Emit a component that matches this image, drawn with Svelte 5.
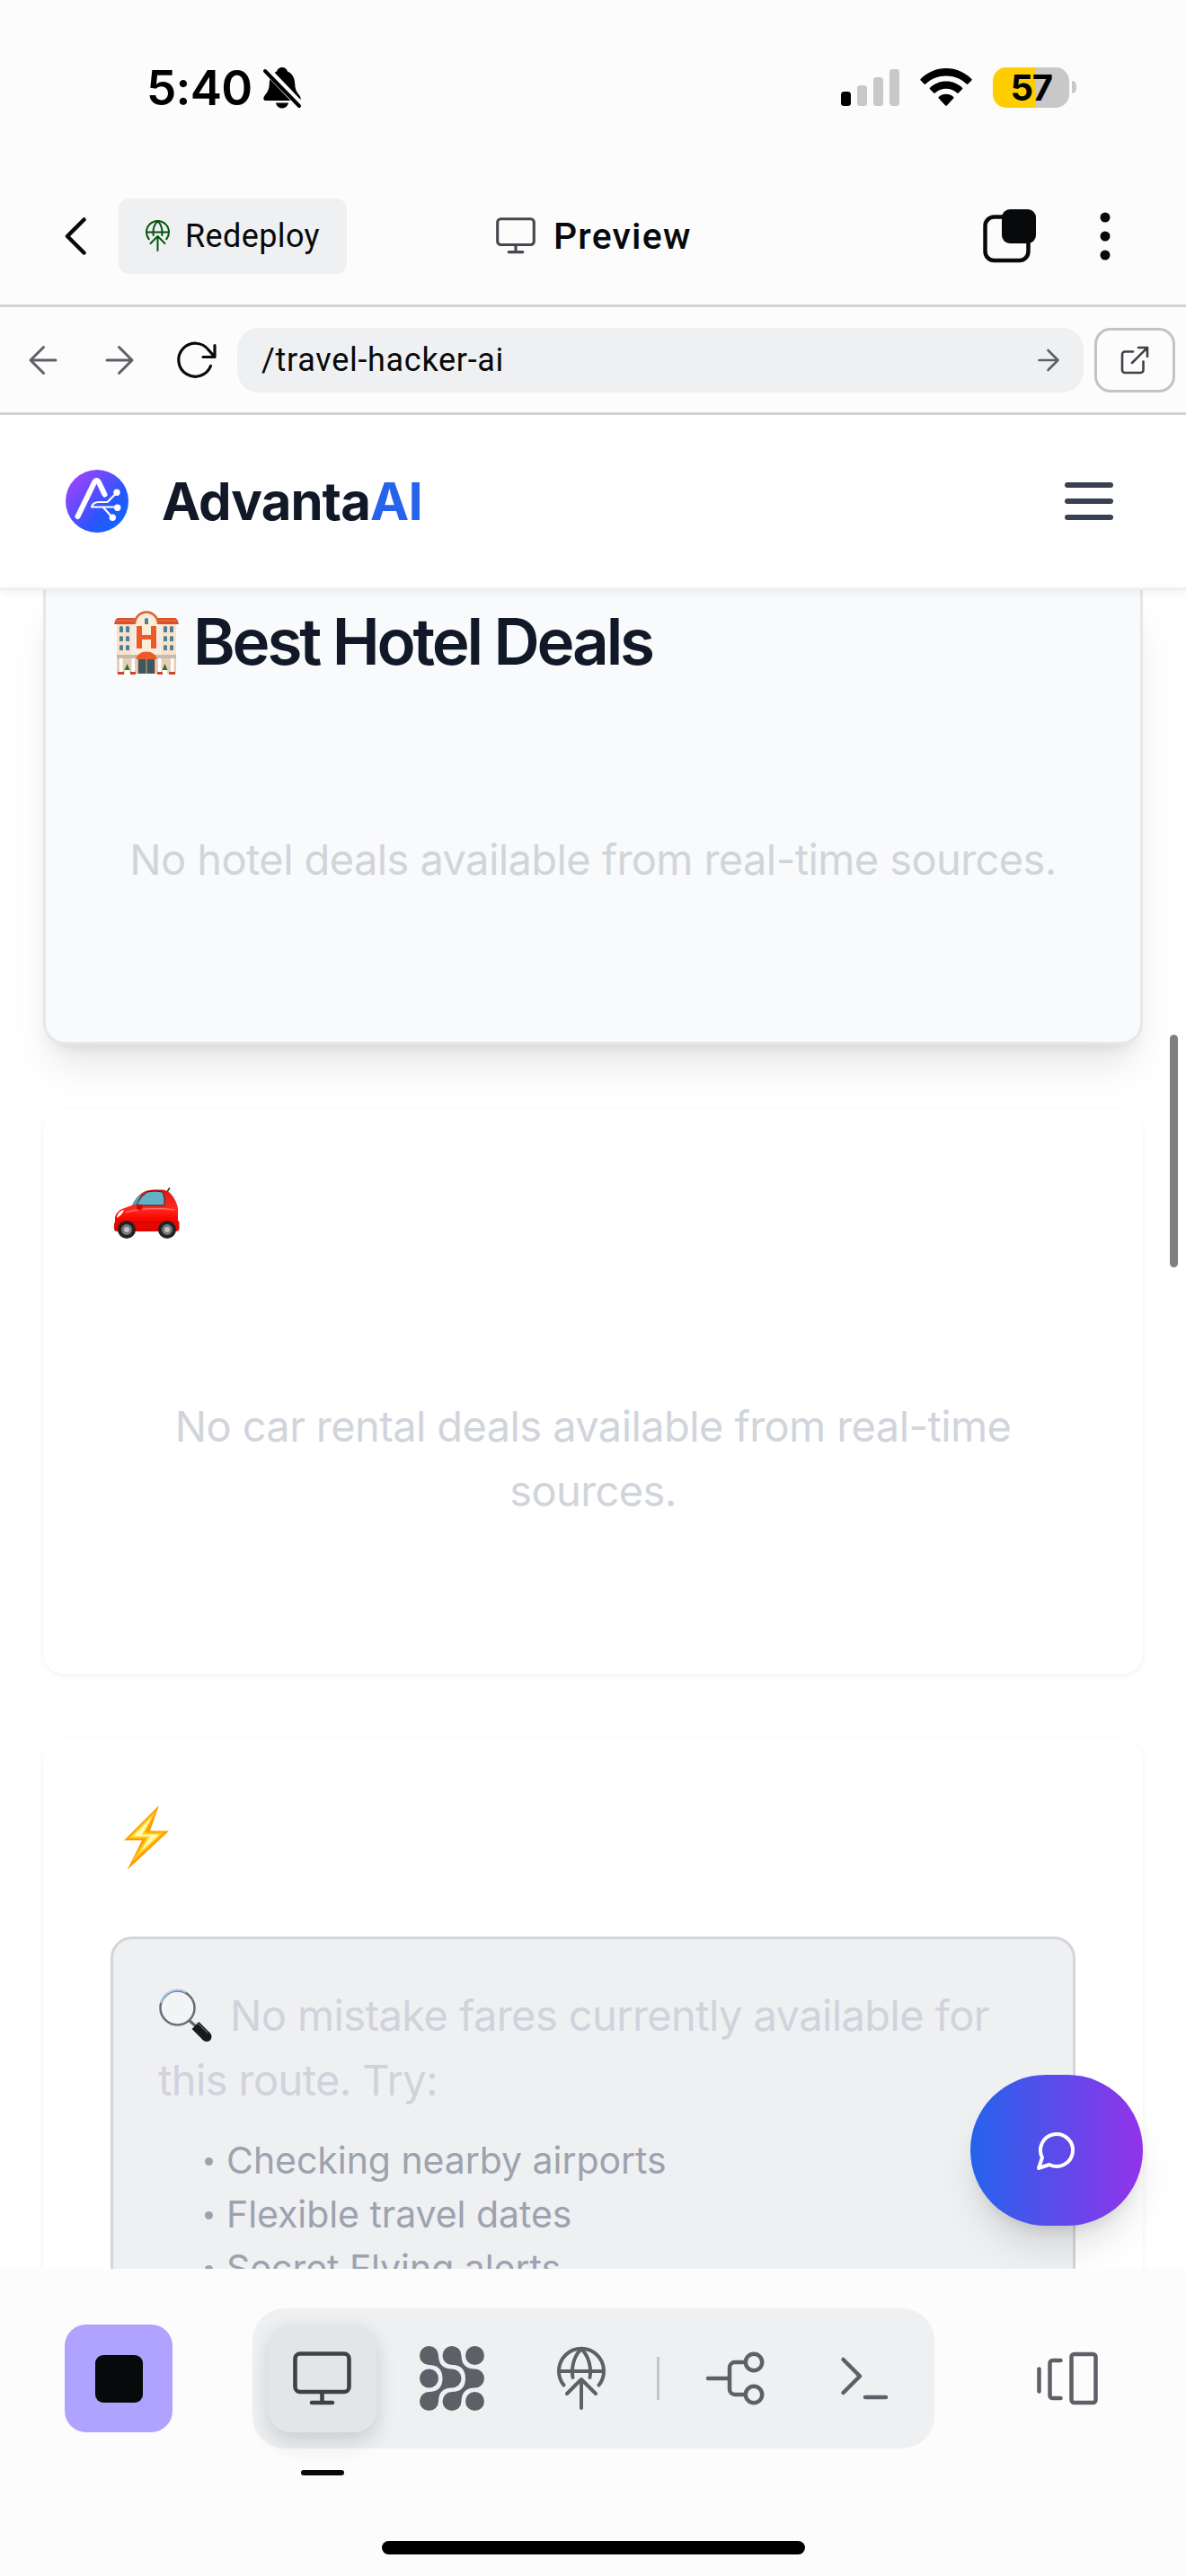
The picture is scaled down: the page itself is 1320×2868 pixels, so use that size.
<script>
  const tips = ['Checking nearby airports', 'Flexible travel dates', 'Secret Flying alerts'];
</script>

{#snippet monitor(w, sw)}
  <svg class="ic" width={w} height={w * 60 / 65} viewBox="0 0 65 60" fill="none" stroke="currentColor" stroke-width={sw} stroke-linecap="round" stroke-linejoin="round">
    <rect x="2.5" y="2.5" width="60" height="42.5" rx="5.5" />
    <path d="M32.5 45v12M21 57h23" />
  </svg>
{/snippet}

{#snippet globe(w)}
  <svg class="ic" width={w} height={w * 71 / 54} viewBox="0 0 54 71" fill="none" stroke="currentColor" stroke-width="4" stroke-linecap="round" stroke-linejoin="round">
    <path d="M7.5 42.5A25 25 0 1 1 46.5 42.5M2 27h50" />
    <path d="M17.5 34C15.500 23 19 9 27 2.500C35 9 38.500 23 36.500 34" />
    <path d="M27 68V36M11 52L27 36L43 52" />
  </svg>
{/snippet}

<div class="screen">
  <header class="status">
    <div class="clock">
      <span>5:40</span>
      <svg width="42" height="46" viewBox="0 0 42 46">
        <path d="M21 0c-3 0-5 1.500-6 4.500C9.500 7 7 12 6.800 18 6.500 26 4 28 1.200 32 -.5 35 .5 37 3 37h36c2.500 0 3.500-2 1.800-5C38 28 35.500 26 35.200 18 35 12 32.500 7 27 4.500 26 1.500 24 0 21 0zM14 39.500h14c-.8 3.800-3.500 6-7 6s-6.200-2.200-7-6z" />
        <path d="M0 -1L44 45" stroke="#fcfcfc" stroke-width="9" />
        <path d="M2 4L40 43" stroke="#000" stroke-width="4" stroke-linecap="round" />
      </svg>
    </div>
    <div class="radio">
      <svg width="65" height="41" viewBox="0 0 65 41">
        <rect y="25" width="11" height="16" rx="3.500" />
        <g fill="#c8c8c8">
          <rect x="18" y="18" width="11" height="23" rx="3.500" />
          <rect x="36" y="9" width="11" height="32" rx="3.500" />
          <rect x="54" width="11" height="41" rx="3.500" />
        </g>
      </svg>
      <svg class="wifi" width="58" height="42" viewBox="0 0 58 42">
        <path d="M29 0C18 0 8 4.500 .6 12q-.7.800 0 1.600l4 4q.8.700 1.600 0C12.500 11.500 20.500 8.500 29 8.500s16.500 3 22.800 9.100q.8.700 1.600 0l4-4q.7-.8 0-1.600C50 4.500 40 0 29 0z" />
        <path d="M29 14.500c-7 0-13.300 2.700-18 7.200q-.8.800 0 1.600l4.200 4.200q.8.700 1.600 0C20 24.500 24.300 22.800 29 22.800s9 1.700 12.200 4.700q.8.700 1.600 0l4.200-4.200q.8-.8 0-1.600C42.300 17.200 36 14.500 29 14.500z" />
        <path d="M29 28.700c-3.200 0-6 1.200-8.200 3.200q-.8.800 0 1.600l7.200 7.800q1 1 2 0l7.200-7.800q.8-.8 0-1.600C35 29.900 32.200 28.700 29 28.700z" />
      </svg>
      <div class="battery"><span>57</span></div>
      <div class="nub"></div>
    </div>
  </header>

  <nav class="top">
    <svg class="back" width="24" height="42" viewBox="0 0 24 42" fill="none" stroke="#07090a" stroke-width="4.500" stroke-linecap="round" stroke-linejoin="round"><path d="M21.500 2.500L3 21L21.500 39.500" /></svg>
    <button class="redeploy"><span class="green">{@render globe(27)}</span><span>Redeploy</span></button>
    <div class="title"><span class="slate">{@render monitor(44, 4.6)}</span><span>Preview</span></div>
    <svg class="tabs" width="60" height="60" viewBox="0 0 60 60">
      <rect x="2.500" y="8.500" width="48" height="48.500" rx="10" fill="none" stroke="#07090a" stroke-width="4.500" />
      <rect x="21" y="0" width="38" height="38" rx="9" fill="#07090a" />
    </svg>
    <svg class="dots" width="12" height="54" viewBox="0 0 12 54" fill="#07090a"><circle cx="6" cy="6" r="5.500" /><circle cx="6" cy="27" r="5.500" /><circle cx="6" cy="48" r="5.500" /></svg>
  </nav>

  <div class="address">
    <svg width="32" height="32" viewBox="0 0 32 32" fill="none" stroke="#5e6067" stroke-width="3" stroke-linecap="round" stroke-linejoin="round"><path d="M30 16H2M16.500 1.500L2 16L16.500 30.500" /></svg>
    <svg width="32" height="32" viewBox="0 0 32 32" fill="none" stroke="#5e6067" stroke-width="3" stroke-linecap="round" stroke-linejoin="round"><path d="M2 16H30M15.500 1.500L30 16L15.500 30.500" /></svg>
    <svg class="reload" width="45" height="42" viewBox="0 0 45 42" fill="none" stroke="#07090a" stroke-width="3.200" stroke-linecap="round" stroke-linejoin="round"><path d="M38.500 27.500A18.500 18.500 0 1 1 36 9.500L43 17.500M43 4.500V17.500H30" /></svg>
    <div class="field">
      <span>/travel-hacker-ai</span>
      <svg width="24" height="26" viewBox="0 0 24 26" fill="none" stroke="#5e6067" stroke-width="2.600" stroke-linecap="round" stroke-linejoin="round"><path d="M1.500 13H22.500M11.500 2L22.500 13L11.500 24" /></svg>
    </div>
    <button class="open">
      <svg width="32" height="32" viewBox="0 0 32 32" fill="none" stroke="#3f4148" stroke-width="2.600" stroke-linecap="round" stroke-linejoin="round"><path d="M14 6.500H5A3 3 0 0 0 2 9.500V27A3 3 0 0 0 5 30H22.500A3 3 0 0 0 25.500 27V17.500M20 2H30V12M30 2L13 19" /></svg>
    </button>
  </div>

  <main class="page">
    <div class="site">
      <svg class="logo" width="70" height="70" viewBox="0 0 70 70">
        <defs><linearGradient id="lg" x1="0.100" y1="0.150" x2="0.850" y2="0.850"><stop offset="0" stop-color="#9a43ff" /><stop offset="0.700" stop-color="#2b55ff" /><stop offset="1" stop-color="#1464ff" /></linearGradient></defs>
        <circle cx="35" cy="35" r="35" fill="url(#lg)" />
        <g fill="none" stroke="#fff" stroke-linecap="round" stroke-linejoin="round">
          <path d="M13.500 52L32 14Q34.500 10 37 14L43.500 27.500" stroke-width="6" />
          <path d="M29 41.500Q30.500 36 37 36H46.500L57 25.500M29 41.500H57M41.500 41.500L52 53" stroke-width="2.200" />
        </g>
        <g fill="#fff"><circle cx="57" cy="25.300" r="3.700" /><circle cx="57.700" cy="42.300" r="3.700" /><circle cx="52.300" cy="53.300" r="3.700" /></g>
      </svg>
      <div class="brand">Advanta<b>AI</b></div>
      <div class="burger"><i></i><i></i><i></i></div>
    </div>

    <div class="content">
      <section class="card hotel">
        <h2>
          <svg width="72" height="72" viewBox="0 0 72 72">
            <path d="M3 14H69V70H3z" fill="#f8e0c9" />
            <path d="M23 70V14a13 13 0 0 1 26 0V70z" fill="#fbeed8" />
            <path d="M19 15h4v34h-4zM49 15h4v34h-4z" fill="#f1ece8" />
            <path d="M0 15Q1 9 4 8H23V15zM49 8H68Q71 9 72 15H49z" fill="#d9502b" />
            <path d="M1 11H22M50 11H71" stroke="#f07a50" stroke-width="1" />
            <path d="M23 15a13 13.500 0 0 1 26 0" fill="none" stroke="#e0603a" stroke-width="2.500" />
            <path d="M25 17h6v10h10V17h6v25h-6V32H31V42h-6z" fill="#ee5a2a" />
            <g fill="#4d8099"><path d="M34 9q2-2 4 0v6h-4zM6 18q2-2 4 0v6H6zM13 18q2-2 4 0v6h-4zM6 29q2-2 4 0v5H6zM13 29q2-2 4 0v5h-4zM6 39q2-2 4 0v5H6zM13 39q2-2 4 0v5h-4zM55 18q2-2 4 0v6h-4zM62 18q2-2 4 0v6h-4zM55 29q2-2 4 0v5h-4zM62 29q2-2 4 0v5h-4zM55 39q2-2 4 0v5h-4zM62 39q2-2 4 0v5h-4z" /></g>
            <path d="M3 53H69V70H3z" fill="#e8cdb6" />
            <path d="M3 49H69V53H3z" fill="#c4bcb0" />
            <path d="M24.500 54a11.500 8.500 0 0 1 23 0z" fill="#ee5a2a" />
            <path d="M26 54H46V70H26z" fill="#3f5563" />
            <path d="M35.500 54h1v16h-1zM26 54h1v16h-1zM45 54h1v16h-1z" fill="#d8b25a" />
            <path d="M6 53h3.500v15H6zM19.500 53h3.500v15h-3.500zM49 53h3.500v15H49zM63 53h3.500v15H63z" fill="#fff" />
            <path d="M12 66h5v4h-5zM54 66h5v4h-5z" fill="#fff" />
            <path d="M11.500 66l3-7 3 7zM53.500 66l3-7 3 7z" fill="#1d7a2a" />
            <path d="M4 68h7v3H4zM18 68h6v3h-6zM48 68h6v3h-6zM61 68h7v3h-7z" fill="#c9482a" />
          </svg>
          <span>Best Hotel Deals</span>
        </h2>
        <p><span>No hotel deals available from real-time sources.</span></p>
      </section>

      <section class="card car">
        <h2>
          <svg width="73" height="58" viewBox="0 0 73 58">
            <defs><linearGradient id="body" x1="0" y1="0" x2="0" y2="1"><stop offset="0" stop-color="#d81a12" /><stop offset="0.450" stop-color="#ff2a20" /><stop offset="0.700" stop-color="#f80600" /><stop offset="1" stop-color="#d80400" /></linearGradient></defs>
            <path d="M59 5L61.500 1" stroke="#444" stroke-width="1.800" stroke-linecap="round" />
            <path d="M1 39V33Q3 26 10 23.500L20 20Q25 10 33 5Q37 2.500 45 2.500H52Q59 2.500 63 7Q69 14 71 23V37L72.500 38V46Q72 49 69 49H3Q0 49 0 46V40z" fill="url(#body)" />
            <path d="M25 19Q30 9 37 5Q45 3 54 5Q57 12 56 20H32z" fill="#62b0c4" stroke="#4b1a1a" stroke-width="1" />
            <path d="M20 20Q24 11 31 6L25 19z" fill="#4d9fb5" />
            <path d="M3 33Q5 26 11 25Q9 31 3 34z" fill="#fff" />
            <path d="M3 39H70" stroke="#b80a06" stroke-width="1" />
            <path d="M12 28Q35 21 68 25" fill="none" stroke="#ff7a6e" stroke-width="1.200" />
            <rect x="25" y="19" width="6.500" height="6" rx="2" fill="#c90d08" />
            <circle cx="14" cy="47" r="10" fill="#222" /><circle cx="59" cy="47" r="10" fill="#222" />
            <circle cx="14" cy="47" r="6" fill="#77777b" /><circle cx="59" cy="47" r="6" fill="#77777b" />
            <circle cx="14" cy="47" r="3" fill="#c4c4c8" /><circle cx="59" cy="47" r="3" fill="#c4c4c8" />
          </svg>
        </h2>
        <p><span>No car rental deals available from real-time</span><br /><span>sources.</span></p>
      </section>

      <section class="card fares">
        <h2>
          <svg width="50" height="72" viewBox="0 0 50 72">
            <path d="M39 0L0 39H20L3.500 72L50 28.500H29z" fill="#ff9d00" />
            <path d="M35.500 6L5 36.500H25L9 63L44 30.500H23z" fill="#ffd21f" />
            <path d="M32 12L10 34.500H29L18 52L39 32.500H20z" fill="#fff9b8" />
          </svg>
        </h2>
        <div class="box">
          <p class="l1">
            <svg width="60" height="60" viewBox="0 0 60 60">
              <path d="M34 35L42 42" stroke="#63676b" stroke-width="3" />
              <path d="M41.500 41L53.500 53" stroke="#17191c" stroke-width="11" />
              <path d="M53 52.500L54 53.500" stroke="#17191c" stroke-width="11" stroke-linecap="round" />
              <path d="M44 38.500L55 49" stroke="#55585c" stroke-width="1.500" stroke-linecap="round" />
              <circle cx="21.500" cy="21.500" r="19" fill="#f3f4f5" stroke="#6b6f73" stroke-width="2.500" />
              <path d="M3 16A19.500 19.500 0 0 1 31 4" fill="none" stroke="#a9c8ee" stroke-width="2" />
            </svg>
            <span>No mistake fares currently available for</span>
          </p>
          <p class="l2"><span>this route. Try:</span></p>
          <ul>
            {#each tips as tip}
              <li><i></i><span>{tip}</span></li>
            {/each}
          </ul>
        </div>
      </section>
    </div>
    <div class="scroll"></div>
    <button class="fab">
      <svg width="48" height="48" viewBox="0 0 24 24" fill="none" stroke="#fff" stroke-width="2" stroke-linecap="round" stroke-linejoin="round"><path d="M7.900 20A9 9 0 1 0 4 16.100L2 22Z" /></svg>
    </button>
  </main>

  <footer>
    <div class="tools">
      <button class="stop"><i></i></button>
      <div class="pill">
        <button class="tool active">{@render monitor(65, 4.6)}<i class="mark"></i></button>
        <button class="tool">
          <svg width="72" height="72" viewBox="0 0 72 72" fill="currentColor">
            <path d="M10.500 0A10.500 10.500 0 0 1 21 10.500C21 20 26 25.500 36 25.500A10.500 10.500 0 0 1 36 46.500C26 46.500 21 52 21 61.500A10.500 10.500 0 1 1 10.500 51C20 51 25.500 46 25.500 36S20 21 10.500 21A10.500 10.500 0 0 1 10.500 0z" />
            <path d="M36 0A10.500 10.500 0 0 1 46.500 10.500C46.500 20 51.500 25.500 61.500 25.500A10.500 10.500 0 0 1 61.500 46.500C51.500 46.500 46.500 52 46.500 61.500A10.500 10.500 0 1 1 36 51C45.500 51 51 46 51 36S45.500 21 36 21A10.500 10.500 0 0 1 36 0z" />
            <circle cx="61.500" cy="10.500" r="10.500" /><circle cx="10.500" cy="36" r="10.500" /><circle cx="61.500" cy="61.500" r="10.500" />
          </svg>
        </button>
        <button class="tool">{@render globe(54)}</button>
        <span class="sep"></span>
        <button class="tool">
          <svg width="66" height="60" viewBox="0 0 66 60" fill="none" stroke="currentColor" stroke-width="4.500" stroke-linecap="round" stroke-linejoin="round"><circle cx="54" cy="12" r="9.200" /><circle cx="54" cy="48" r="9.200" /><path d="M3 30H27M44 12H33A6 6 0 0 0 27 18V42A6 6 0 0 0 33 48H44" /></svg>
        </button>
        <button class="tool">
          <svg width="54" height="48" viewBox="0 0 54 48" fill="none" stroke="currentColor" stroke-width="4.500" stroke-linecap="round" stroke-linejoin="round"><path d="M3.500 3L22 21.500L3.500 40M28 45H51" /></svg>
        </button>
      </div>
      <button class="layout">
        <svg width="70" height="60" viewBox="0 0 70 60" fill="none" stroke="currentColor" stroke-width="4.500" stroke-linecap="round" stroke-linejoin="round"><path d="M3.500 19.500V44.500M27.500 10H18.500A3 3 0 0 0 15.500 13V49A3 3 0 0 0 18.500 52H27.500" /><rect x="39.500" y="3" width="27" height="54" rx="3" /></svg>
      </button>
    </div>
    <div class="home"></div>
  </footer>
</div>

<style>
  :global(body) { margin: 0; }
  .screen { width: 1320px; height: 2868px; overflow: hidden; display: flex; flex-direction: column; background: #fcfcfc; font-family: Inter, "Liberation Sans", sans-serif; color: #07090a; }
  .screen :global(*) { box-sizing: border-box; }
  svg { display: block; flex: none; overflow: visible; }
  button { border: 0; padding: 0; margin: 0; background: none; font: inherit; color: inherit; display: flex; align-items: center; justify-content: center; flex: none; }
  h2, p, ul { margin: 0; padding: 0; }
  span { white-space: nowrap; }

  .status { height: 186px; flex: none; display: flex; justify-content: space-between; padding: 73px 122px 0 163px; color: #000; }
  .clock { display: flex; height: 48px; gap: 13px; align-items: center; font-size: 53px; font-weight: 600; line-height: 48px; letter-spacing: -0.800px; }
  .clock span { margin-top: 2px; }
  .clock svg { margin-top: 2px; }
  .radio { display: flex; align-items: center; height: 48px; }
  .wifi { margin: 0 23px; }
  .battery { width: 85px; height: 45px; border-radius: 15px; background: linear-gradient(90deg, #ffce00 48px, #c8c8c8 48px); display: flex; align-items: center; justify-content: center; font-size: 40px; font-weight: 700; letter-spacing: -1.500px; }
  .nub { width: 5px; height: 14px; margin-left: 3px; background: #c8c8c8; border-radius: 0 5px 5px 0; }

  .top { height: 156px; flex: none; border-bottom: 3px solid #d3d3d3; display: flex; align-items: center; padding: 0 84px 0 72px; }
  .redeploy { width: 254px; height: 84px; margin-left: 36px; border-radius: 12px; background: #eff0f2; font-family: Roboto, sans-serif; font-size: 36px; gap: 17px; letter-spacing: 0.400px; }
  .green { color: #07530f; }
  .slate { color: #46484f; }
  .title { flex: 1; margin-left: 166px; display: flex; align-items: center; gap: 20px; font-family: Roboto, sans-serif; font-size: 41px; font-weight: 500; letter-spacing: 1.200px; }
  .dots { margin-left: 70px; }

  .address { height: 120px; flex: none; border-bottom: 3px solid #d3d3d3; display: flex; align-items: center; padding: 0 12px 0 32px; }
  .address > svg + svg { margin-left: 53px; }
  .address > .reload { margin-left: 47px; }
  .field { margin-left: 23px; width: 942px; height: 72px; border-radius: 24px; background: #eff0f2; display: flex; align-items: center; justify-content: space-between; padding: 0 27px; font-family: Roboto, sans-serif; font-size: 36px; letter-spacing: 0.700px; }
  .open { margin-left: 12px; width: 90px; height: 72px; border: 3px solid #c0c5c4; border-radius: 18px; }

  .page { height: 2064px; flex: none; background: #fff; position: relative; overflow: hidden; display: flex; flex-direction: column; }
  .site { height: 195px; flex: none; background: #fefefe; border-bottom: 3px solid #eff0f2; display: flex; align-items: center; padding: 0 81px 0 73px; position: relative; z-index: 1; box-shadow: 0 3px 9px rgba(0, 0, 0, 0.06); }
  .brand { flex: 1; margin-left: 37px; font-size: 58px; font-weight: 700; color: #111827; letter-spacing: -0.900px; }
  .brand b { color: #2563eb; font-weight: 700; }
  .burger { width: 54px; display: grid; gap: 12px; }
  .burger i { height: 6px; border-radius: 3px; background: #374151; }

  .content { flex: 1; min-height: 0; padding: 0 48px; display: flex; flex-direction: column; gap: 72px; }
  .card { flex: none; border-radius: 24px; padding: 0 72px; }
  .hotel { height: 506px; background: #f9fafb; border: 3px solid #e5e7eb; border-top: 0; border-radius: 0 0 24px 24px; box-shadow: 0 30px 45px -9px rgba(0, 0, 0, 0.1), 0 12px 18px -12px rgba(0, 0, 0, 0.12); }
  .car { height: 629px; background: #fff; box-shadow: 0 2px 6px rgba(0, 0, 0, 0.06); padding: 0 75px; }
  .fares { height: 700px; background: #fff; box-shadow: 0 2px 6px rgba(0, 0, 0, 0.06); padding: 0 75px; }
  h2 { display: flex; align-items: center; font-size: 71px; line-height: 96px; font-weight: 600; letter-spacing: -3.200px; color: #111827; }
  .hotel h2 { height: 107px; padding-top: 11px; gap: 16px; margin-left: 4px; }
  .hotel h2 span { margin-top: -4px; }
  .hotel p { margin-top: 157px; }
  p { font-size: 47px; line-height: 72px; color: #d1d5db; letter-spacing: -0.600px; }
  .hotel p, .car p { text-align: center; }
  .car h2 { height: 144px; padding-top: 88px; margin-left: 4px; }
  .car p { margin-top: 173px; }
  .fares h2 { height: 144px; padding-top: 76px; margin-left: 15px; }
  .box { margin-top: 76px; height: 560px; border: 3px solid #d3d5d8; border-radius: 24px; background: #eff0f2; padding: 49px 50px; }
  .box p { color: #d1d3dc; display: flex; align-items: center; height: 72px; }
  .l1 { gap: 20px; }
  ul { list-style: none; margin-top: 23px; }
  li { height: 60px; line-height: 60px; display: flex; align-items: center; font-size: 41px; color: #9ca3af; padding-left: 52px; letter-spacing: -0.050px; }
  li i { width: 9px; height: 9px; border-radius: 50%; background: #9ca3af; margin: 2px 15px 0 0; }

  .scroll { position: absolute; right: 9px; top: 690px; width: 9px; height: 259px; border-radius: 5px; background: #7f7f7f; }
  .fab { position: absolute; right: 48px; bottom: 48px; width: 192px; height: 168px; border-radius: 84px; background: linear-gradient(90deg, #2563eb, #9333ea); box-shadow: 0 30px 45px -9px rgba(0, 0, 0, 0.12), 0 12px 18px -9px rgba(0, 0, 0, 0.12); }

  footer { height: 342px; flex: none; display: flex; flex-direction: column; padding-top: 44px; }
  .tools { display: flex; align-items: center; justify-content: space-between; padding: 0 72px; height: 156px; flex: none; color: #5e6067; }
  .stop { width: 120px; height: 120px; border-radius: 24px; background: #b0a2ff; }
  .stop i { width: 53px; height: 53px; border-radius: 9px; background: #07090a; }
  .pill { height: 156px; border-radius: 36px; background: #eff0f2; display: flex; align-items: center; gap: 24px; padding: 0 18px; }
  .tool { width: 120px; height: 120px; border-radius: 24px; position: relative; }
  .active { background: #e4e5e7; color: #3f4148; box-shadow: 0 12px 24px rgba(0, 0, 0, 0.13), 0 0 20px rgba(0, 0, 0, 0.03); }
  .mark { position: absolute; left: 36px; top: 162px; width: 48px; height: 6px; border-radius: 3px; background: #07090a; }
  .sep { width: 3px; height: 48px; background: #c2c4c8; }
  .layout { width: 120px; height: 120px; }
  .home { margin: 103px auto 0; width: 471px; height: 15px; border-radius: 8px; background: #000; }
</style>
